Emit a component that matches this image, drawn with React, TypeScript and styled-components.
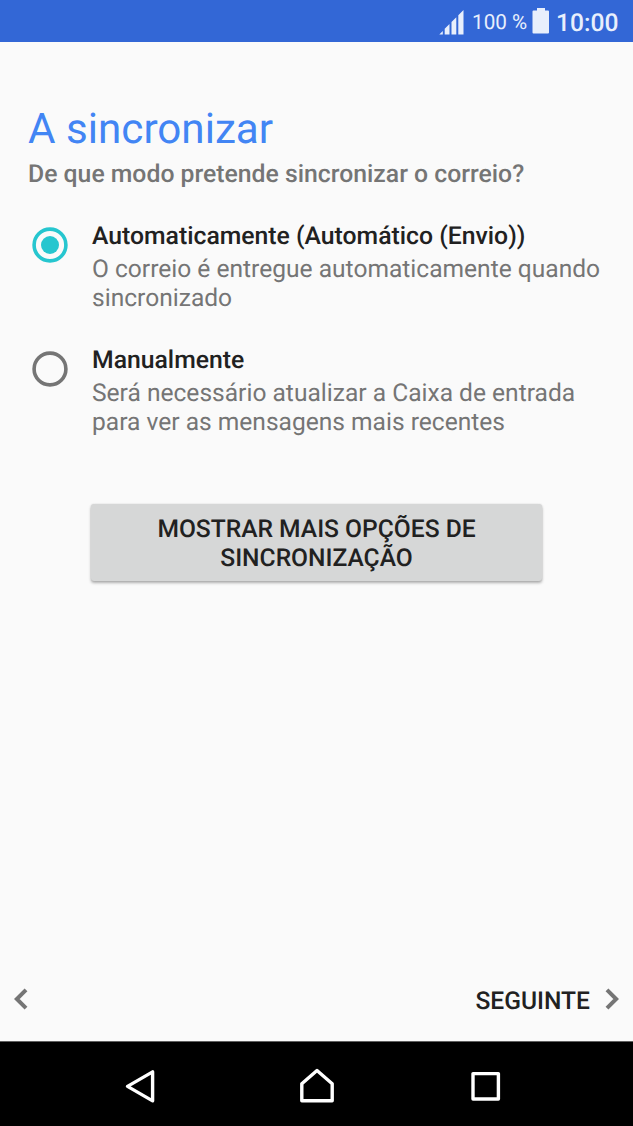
import React, { useState } from "react";
import styled, { createGlobalStyle } from "styled-components";

const GlobalStyle = createGlobalStyle`
  * { box-sizing: border-box; }
  html, body { margin: 0; padding: 0; }
  body {
    font-family: Roboto, "Liberation Sans", sans-serif;
    background: #fafafa;
    text-rendering: geometricPrecision;
  }
`;

const Screen = styled.div`
  width: 633px;
  height: 1126px;
  display: flex;
  flex-direction: column;
  background: #fafafa;
  overflow: hidden;
`;

const StatusBar = styled.header`
  height: 42px;
  flex: none;
  display: flex;
  align-items: flex-start;
  justify-content: flex-end;
  padding-right: 14px;
  background: #3367d6;
  color: #e8effc;
  white-space: nowrap;
`;

const SignalIcon = styled.svg`
  width: 26px;
  height: 26px;
  margin: 9px 7px 0 0;
`;

const BatteryLevel = styled.span`
  width: 54px;
  margin-right: 6px;
  padding-top: 11px;
  font-size: 20.7px;
  line-height: 24px;
`;

const BatteryIcon = styled.svg`
  width: 18px;
  height: 27px;
  margin: 7px 6px 0 0;
`;

const Clock = styled.span`
  width: 63px;
  padding-top: 9px;
  font-size: 24.6px;
  font-weight: 500;
  line-height: 29px;
`;

const Content = styled.main`
  flex: 1;
  padding: 63px 28px 0;
`;

const Title = styled.h1`
  margin: 0;
  font-size: 42.2px;
  font-weight: 400;
  line-height: 50px;
  color: #4285f4;
`;

const Question = styled.p`
  margin: 5px 0 32px;
  font-size: 24.78px;
  font-weight: 500;
  line-height: 29px;
  color: #757575;
  white-space: nowrap;
`;

const Options = styled.div`
  display: flex;
  flex-direction: column;
  gap: 33px;
`;

const Option = styled.div`
  display: flex;
  align-items: flex-start;
  cursor: pointer;
`;

const Radio = styled.svg<{ $checked: boolean }>`
  flex: none;
  width: 36px;
  height: 36px;
  margin: 6px 24px 0 4px;
  color: ${(p) => (p.$checked ? "#26c6cf" : "#757575")};
`;

const OptionLabel = styled.div`
  padding-top: 1px;
  margin-bottom: 3px;
  font-size: 24.75px;
  font-weight: 500;
  line-height: 29px;
  color: #212121;
  white-space: nowrap;
`;

const OptionDetail = styled.div`
  font-size: 24.57px;
  line-height: 29px;
  color: #757575;
  white-space: nowrap;
`;

const MoreButton = styled.button`
  display: block;
  width: 451px;
  height: 77px;
  margin: 68px 0 0 63px;
  padding: 3px 0 0;
  border: 0;
  border-radius: 3px;
  background: #d6d7d7;
  box-shadow: 0 2px 3px rgba(0, 0, 0, 0.3), 0 0 2px rgba(0, 0, 0, 0.12);
  font: 500 24.6px/29px Roboto, "Liberation Sans", sans-serif;
  color: #212121;
  text-rendering: geometricPrecision;
`;

const Pager = styled.footer`
  height: 83px;
  flex: none;
  display: flex;
  align-items: flex-start;
  justify-content: space-between;
  padding: 29px 14px 0 14px;
`;

const NextButton = styled.div`
  display: flex;
  gap: 15px;
  font-size: 24.6px;
  font-weight: 500;
  line-height: 29px;
  color: #212121;
`;

const Chevron = styled.svg`
  width: 14px;
  height: 22px;
  margin-top: 1px;
  fill: none;
  stroke: #757575;
  stroke-width: 4;
`;

const NavBar = styled.nav`
  height: 85px;
  flex: none;
  display: flex;
  align-items: center;
  justify-content: center;
  gap: 129px;
  padding-top: 4px;
  background: #000;
  border-top: 1px solid #606060;
`;

const NavIcon = styled.svg`
  width: 40px;
  height: 40px;
  fill: none;
  stroke: #fff;
  stroke-width: 3.4;
  stroke-linejoin: round;
  overflow: visible;
`;

const options = [
  {
    label: "Automaticamente (Automático (Envio))",
    detail: ["O correio é entregue automaticamente quando", "sincronizado"],
  },
  {
    label: "Manualmente",
    detail: ["Será necessário atualizar a Caixa de entrada", "para ver as mensagens mais recentes"],
  },
];

export default function App() {
  const [selected, setSelected] = useState(0);

  return (
    <>
      <GlobalStyle />
      <Screen>
        <StatusBar>
          <SignalIcon viewBox="0 0 26 26" fill="#e8effc">
            <path d="M0.3 25.5 3.8 22V25.5ZM5.7 19.8 10.5 15V25.5H5.7ZM12.5 13 17.3 8.2V25.5H12.5ZM19.3 6.2 24.5 1V25.5H19.3Z" />
          </SignalIcon>
          <BatteryLevel>100 %</BatteryLevel>
          <BatteryIcon viewBox="0 0 18 27" fill="#e8effc">
            <path d="M5 1H13V3.5H16Q17 3.5 17 4.5V25.5Q17 26.5 16 26.5H1.5Q0.5 26.5 0.5 25.5V4.5Q0.5 3.5 1.5 3.5H5Z" />
          </BatteryIcon>
          <Clock>10:00</Clock>
        </StatusBar>
        <Content>
          <Title>A sincronizar</Title>
          <Question>De que modo pretende sincronizar o correio?</Question>
          <Options role="radiogroup">
            {options.map((option, i) => (
              <Option
                key={option.label}
                role="radio"
                aria-checked={i === selected}
                onClick={() => setSelected(i)}
              >
                <Radio viewBox="0 0 36 36" $checked={i === selected}>
                  <circle cx="18" cy="18" r="15.9" fill="none" stroke="currentColor" strokeWidth="3.6" />
                  {i === selected && <circle cx="18" cy="18" r="9" fill="currentColor" />}
                </Radio>
                <div>
                  <OptionLabel>{option.label}</OptionLabel>
                  {option.detail.map((line) => (
                    <OptionDetail key={line}>{line}</OptionDetail>
                  ))}
                </div>
              </Option>
            ))}
          </Options>
          <MoreButton>
            MOSTRAR MAIS OPÇÕES DE
            <br />
            SINCRONIZAÇÃO
          </MoreButton>
        </Content>
        <Pager>
          <Chevron viewBox="0 0 14 22">
            <path d="M12 1.8 2.8 11 12 20.2" />
          </Chevron>
          <NextButton>
            SEGUINTE
            <Chevron viewBox="0 0 14 22">
              <path d="M2 1.8 11.2 11 2 20.2" />
            </Chevron>
          </NextButton>
        </Pager>
        <NavBar>
          <NavIcon viewBox="0 0 40 40">
            <path d="M-0.5 20.4 24.6 5.9V34.9Z" />
          </NavIcon>
          <NavIcon viewBox="0 0 40 40">
            <path d="M4.8 34.7V17.7L20 4.5 35.2 17.7V34.7Z" />
          </NavIcon>
          <NavIcon viewBox="0 0 40 40">
            <path d="M7 7.6H32.4V33H7Z" />
          </NavIcon>
        </NavBar>
      </Screen>
    </>
  );
}
